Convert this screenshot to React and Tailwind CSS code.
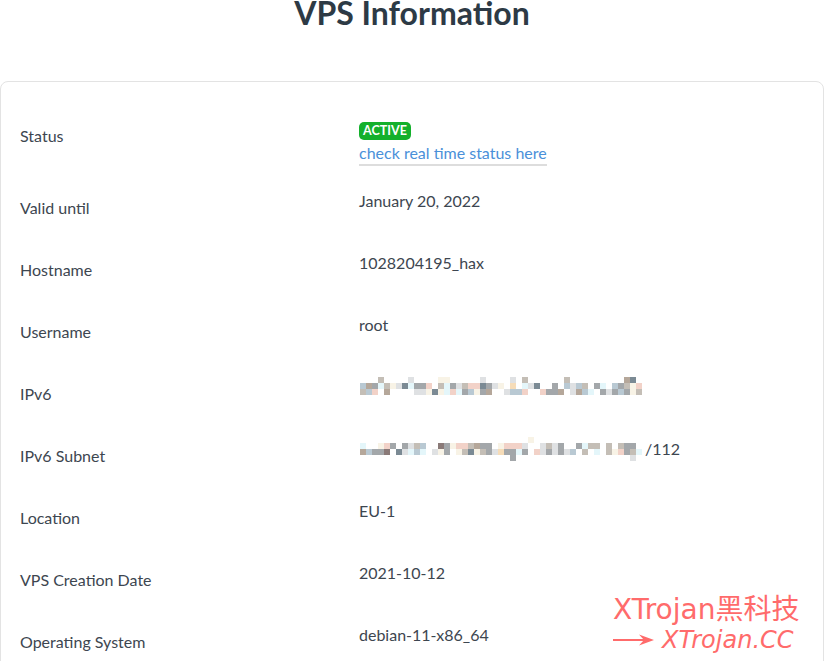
import React from "react";

const palette = {
  a: "#b9c9d3",
  n: "#b5a79a",
  g: "#a3a7aa",
  c: "#e4f6fa",
  t: "#c4beb6",
  y: "#f8f3e6",
  l: "#dfe1e3",
  d: "#7b8a94",
  p: "#f2d2c8",
  o: "#f6dcb8",
  m: "#8a7a78",
};

const ipv6Mosaic = [
  "...t....l....yy.....l....l.t......t.........nd.",
  "angctyldcggp.tcgltppdgly.o.cld..g.alat.gc.agtyp",
  "tap.n....llydycpcgaygn..laap..pggn.lnac.glgagyt",
];

const subnetMosaic = [
  "............................y..................",
  "c..ypg.glta..mgypptngg.ypppl..ltlg..gctt.t.tgg.",
  "naggm.dlcac.lyg.ytdytgloggcg.plglgla.t.c.typgtc",
  ".........................g...................l.",
];

const Mosaic = ({ rows }) => (
  <svg width="282" height={rows.length * 6} className="block">
    {rows.map((row, y) =>
      row
        .split("")
        .map((ch, x) =>
          palette[ch] ? (
            <rect key={`${x}-${y}`} x={x * 6} y={y * 6} width="6" height="6" fill={palette[ch]} />
          ) : null
        )
    )}
  </svg>
);

const Row = ({ label, children }) => (
  <div className="flex mb-[31px]">
    <div className="w-[339px] mt-[7px] h-6 shrink-0">{label}</div>
    <div className="h-6">{children}</div>
  </div>
);

const App = () => {
  return (
    <div
      className="relative h-[661px] overflow-hidden bg-white text-[16px] leading-6 text-[#3d4650]"
      style={{ fontFamily: "Lato, sans-serif" }}
    >
      <h1 className="h-[74px] -mt-[7px] text-center text-[32px] leading-10 font-bold text-[#2d3a45]">
        VPS Information
      </h1>
      <div className="h-[700px] rounded-lg border border-[#e3e3e3] mt-[14px] pt-[35px] px-[19px]">
        <div className="flex mb-[23px]">
          <div className="w-[339px] mt-[7px] shrink-0">Status</div>
          <div className="mt-[5px]">
            <span className="flex h-[18px] w-[52px] items-center justify-center rounded-[5px] bg-[#14b02c] text-[12.5px] font-bold text-white">
              ACTIVE
            </span>
            <a className="block mt-[1px] h-[25px] border-b-2 border-[#dddddd] text-[#4a90d9]">
              check real time status here
            </a>
          </div>
        </div>
        <Row label="Valid until">January 20, 2022</Row>
        <Row label="Hostname">1028204195_hax</Row>
        <Row label="Username">root</Row>
        <Row label="IPv6">
          <div className="mt-[2px] ml-px">
            <Mosaic rows={ipv6Mosaic} />
          </div>
        </Row>
        <Row label="IPv6 Subnet">
          <div className="flex items-center h-6 ml-px">
            <Mosaic rows={subnetMosaic} />
            <span className="ml-[3px]">/112</span>
          </div>
        </Row>
        <Row label="Location">EU-1</Row>
        <Row label="VPS Creation Date">2021-10-12</Row>
        <Row label="Operating System">debian-11-x86_64</Row>
      </div>

      <div
        className="absolute left-[613px] top-[594px] text-[#ff6b6b]"
        style={{ fontFamily: '"DejaVu Sans", "Noto Sans CJK SC", sans-serif' }}
      >
        <div className="text-[28px] leading-8 whitespace-nowrap">XTrojan黑科技</div>
        <div className="flex items-center">
          <svg width="42" height="14" viewBox="0 0 42 14" className="shrink-0">
            <path d="M0 7h33" stroke="#ff6b6b" strokeWidth="2" fill="none" />
            <path d="M41 7 26 1.5l5 5.5-5 5.5z" fill="#ff6b6b" />
          </svg>
          <span className="ml-[7px] text-[24px] italic leading-7">XTrojan.CC</span>
        </div>
      </div>
    </div>
  );
};

export default App;
